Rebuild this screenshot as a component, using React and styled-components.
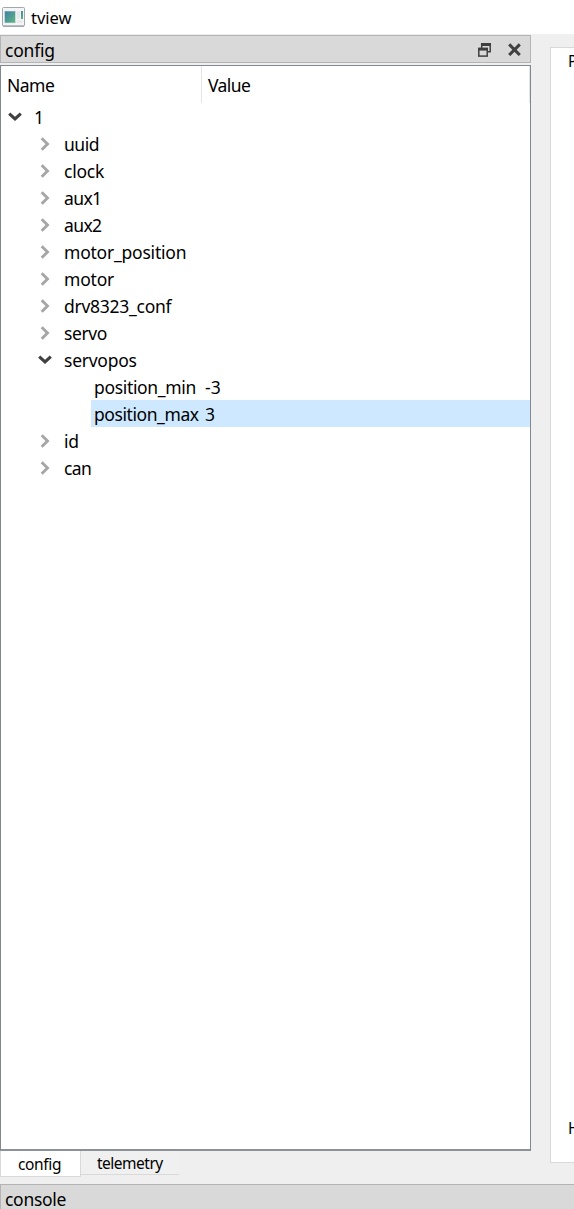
import React from "react";
import styled, { createGlobalStyle } from "styled-components";

const Global = createGlobalStyle`
  * { box-sizing: border-box; }
  body { margin: 0; background: #efefef; overflow: hidden; }
`;
const Window = styled.div`
  width: 574px; height: 1209px; display: flex; flex-direction: column; overflow: hidden;
  background: #efefef; color: #000; font: 17.5px/26px "Noto Sans", "Open Sans", sans-serif;
`;
const TitleBar = styled.header`
  height: 34px; flex: none; display: flex; align-items: center; gap: 6px;
  padding: 0 0 0 2px; background: #fff; font-size: 16.5px; line-height: 28px;
`;
const Title = styled.div`padding-top: 2px;`;
const Main = styled.main`
  height: 1150px; flex: none; display: flex; align-items: flex-start;
`;
const Dock = styled.section`
  width: 531px; flex: none; display: flex; flex-direction: column; padding-top: 1px;
`;
const DockTitle = styled.div`
  height: 28px; flex: none; display: flex; align-items: center; padding: 1px 9px 0 4px;
  border: 1px solid #b4b4b4; background: #d9d9d9;
`;
const DockButtons = styled.div`
  margin-left: auto; display: flex; gap: 17px; align-items: center;
`;
const Tree = styled.div`
  height: 1086px; margin-top: 2px; background: #fff;
  border: 1px solid #828790; border-bottom: 2px solid #8c9098;
`;
const TreeHeader = styled.div`
  height: 37px; display: flex; line-height: 38px; border-right: 1px solid #e5e5e5;
`;
const HeaderCell = styled.div`
  width: ${(p) => p.$w}px; padding-left: 6px;
  border-right: ${(p) => (p.$line ? "1px solid #e5e5e5" : "none")};
`;
const Row = styled.div`
  height: 27px; display: flex; padding-left: ${(p) => p.$depth * 30}px;
`;
const Branch = styled.span`
  width: 30px; height: 27px; flex: none; display: flex; align-items: center; justify-content: center;
  padding: 0 2px 0 0;
`;
const Cells = styled.div`
  flex: 1; display: flex; line-height: 28px; background: ${(p) => (p.$selected ? "#cde8ff" : "transparent")};
`;
const NameCell = styled.div`
  width: ${(p) => 171 - p.$depth * 30}px; padding-left: 3px; flex: none;
`;
const ValueCell = styled.div`padding-left: 3px;`;
const Text = styled.span`
  display: inline-block; white-space: pre; letter-spacing: ${(p) => p.$track || 0}px;
`;
const Tabs = styled.nav`
  display: flex; align-items: flex-start; font-size: 15.5px;
`;
const Tab = styled.div`
  width: ${(p) => p.$w}px; height: ${(p) => (p.$active ? 26 : 24)}px;
  line-height: ${(p) => (p.$active ? 26 : 24)}px; padding-left: ${(p) => (p.$active ? 17 : 16)}px;
  background: ${(p) => (p.$active ? "#fff" : "#f0f0f0")};
  border: 0 solid #d9d9d9; border-bottom-width: 1px;
  border-right-width: ${(p) => (p.$active ? 1 : 0)}px; border-left-width: ${(p) => (p.$active ? 1 : 0)}px;
`;
const Plot = styled.section`
  width: 60px; flex: none; height: 1116px; margin: 13px 0 0 19px; padding: 0 0 21px 17px;
  background: #fff; border: 1px solid #d9d9d9; font-size: 15.5px;
  display: flex; flex-direction: column; justify-content: space-between;
`;
const ConsoleBar = styled.footer`
  height: 40px; flex: none; border: 1px solid #b4b4b4; border-right: 0; background: #d9d9d9;
  padding: 1px 0 0 4px;
`;

const Chevron = ({ open }) =>
  open ? (
    <svg width="14" height="10" viewBox="0 0 14 10">
      <path d="M1.2 1.6 7 7 12.8 1.6" fill="none" stroke="#404040" strokeWidth="3.1" />
    </svg>
  ) : (
    <svg width="10" height="14" viewBox="0 0 10 14">
      <path d="M1.7 1.2 7.5 7 1.7 12.8" fill="none" stroke="#a6a6a6" strokeWidth="2.9" />
    </svg>
  );

const AppIcon = () => (
  <svg width="23" height="20" viewBox="0 0 23 20">
    <defs>
      <linearGradient id="screen" x1="0" y1="0" x2="1" y2="1">
        <stop offset="0" stopColor="#3f7fa6" />
        <stop offset="1" stopColor="#5fb883" />
      </linearGradient>
    </defs>
    <rect x=".5" y=".5" width="22" height="18.5" rx="1" fill="#f5f5f5" stroke="#a0a8ae" />
    <path d="M1 19.2h21" stroke="#8f989f" />
    <rect x="2.5" y="4" width="11" height="12" fill="url(#screen)" stroke="#dfe5ea" strokeWidth=".6" />
    <rect x="14.5" y="4" width="3.5" height="8" fill="#e6e9eb" />
    <rect x="14.5" y="13" width="6" height="3" fill="#e9e9e9" />
    <rect x="19" y="4" width="2" height="8" fill="url(#screen)" />
  </svg>
);

const FloatIcon = () => (
  <svg width="13" height="14" viewBox="0 0 13 14">
    <path d="M3.7 5V1H12.2V8.8H9.5" fill="none" stroke="#404040" strokeWidth="1.5" />
    <path d="M3 1.5H13" stroke="#404040" strokeWidth="3" />
    <rect x=".8" y="5.5" width="8.4" height="7.6" fill="#d9d9d9" stroke="#404040" strokeWidth="1.5" />
    <path d="M0 6.2h10" stroke="#404040" strokeWidth="2.8" />
  </svg>
);

const CloseIcon = () => (
  <svg width="13" height="13" viewBox="0 0 13 13">
    <path d="M1.2 1.4l10.6 10.6M11.8 1.4 1.2 12" stroke="#404040" strokeWidth="3" />
  </svg>
);

const rows = [
  { name: "1", depth: 0, open: true },
  { name: "uuid", depth: 1, track: -0.45 },
  { name: "clock", depth: 1, track: -0.25 },
  { name: "aux1", depth: 1, track: -0.6 },
  { name: "aux2", depth: 1, track: -0.6 },
  { name: "motor_position", depth: 1, track: -0.22 },
  { name: "motor", depth: 1, track: -0.2 },
  { name: "drv8323_conf", depth: 1, track: -0.27 },
  { name: "servo", depth: 1, track: -0.4 },
  { name: "servopos", depth: 1, open: true, track: -0.25 },
  { name: "position_min", depth: 2, leaf: true, value: "-3", track: -0.33 },
  { name: "position_max", depth: 2, leaf: true, value: "3", selected: true, track: -0.42 },
  { name: "id", depth: 1, track: -0.3 },
  { name: "can", depth: 1, track: -0.6 },
];

export default function App() {
  return (
    <Window>
      <Global />
      <TitleBar><AppIcon /><Title><Text>tview</Text></Title></TitleBar>
      <Main>
        <Dock>
          <DockTitle>
            <Text $track={-0.2}>config</Text>
            <DockButtons><FloatIcon /><CloseIcon /></DockButtons>
          </DockTitle>
          <Tree>
            <TreeHeader>
              <HeaderCell $w={201} $line><Text $track={-0.5}>Name</Text></HeaderCell>
              <HeaderCell $w={320}><Text $track={-0.6}>Value</Text></HeaderCell>
            </TreeHeader>
            {rows.map((r) => (
              <Row key={r.name} $depth={r.depth}>
                <Branch>{!r.leaf && <Chevron open={r.open} />}</Branch>
                <Cells $selected={r.selected}>
                  <NameCell $depth={r.depth}><Text $track={r.track}>{r.name}</Text></NameCell>
                  {r.value && <ValueCell><Text>{r.value}</Text></ValueCell>}
                </Cells>
              </Row>
            ))}
          </Tree>
          <Tabs>
            <Tab $w={81} $active><Text $track={-0.35}>config</Text></Tab>
            <Tab $w={98}><Text $track={-0.5}>telemetry</Text></Tab>
          </Tabs>
        </Dock>
        <Plot><Text>P</Text><Text>H</Text></Plot>
      </Main>
      <ConsoleBar><Text $track={-0.3}>console</Text></ConsoleBar>
    </Window>
  );
}
